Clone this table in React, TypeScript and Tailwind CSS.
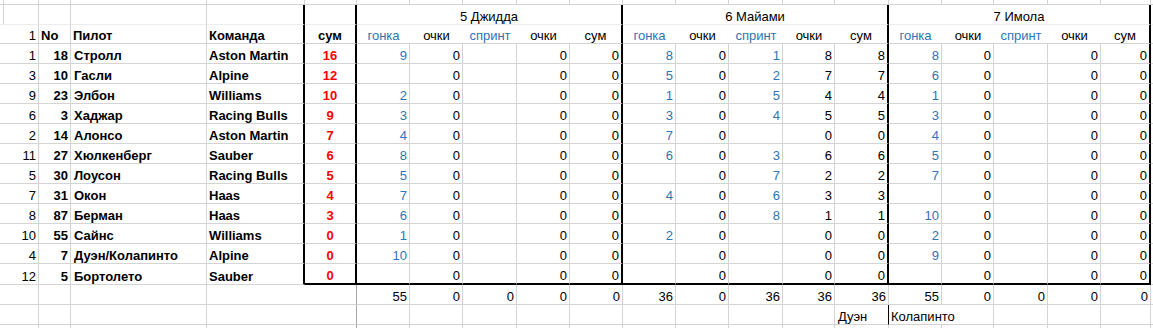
import React from "react";

const GRID =
  "grid grid-cols-[4px_35px_32px_136px_98px_52px_53px_53px_54px_53px_53px_53px_53px_54px_52px_54px_53px_52px_54px_53px_50px_2px]";

const R: Record<string, string> = {
  g: "border-r border-r-[#d4d4d4]",
  K: "border-r-2 border-r-black",
  k: "border-r border-r-black",
  d: "border-r border-r-[#a6a6a6]",
  n: "",
};
const B: Record<string, string> = {
  g: "border-b border-b-[#d4d4d4]",
  K: "border-b-2 border-b-black",
  f: "border-b border-b-[#ececec]",
  n: "",
};
const A: Record<string, string> = {
  r: "justify-end pr-[2px]",
  l: "justify-start pl-[2px]",
  c: "justify-center",
};

type CellProps = {
  r?: string;
  b?: string;
  a?: string;
  cls?: string;
  children?: React.ReactNode;
};

function Cell({ r = "g", b = "g", a = "r", cls = "", children }: CellProps) {
  return (
    <div
      className={`flex items-end whitespace-nowrap overflow-visible leading-[15px] ${R[r]} ${B[b]} ${A[a]} ${cls}`}
    >
      {children}
    </div>
  );
}

const BLUE = "text-[#2e75b6]";

const drivers: [string, string, string, string, string][] = [
  ["1", "18", "Стролл", "Aston Martin", "16"],
  ["3", "10", "Гасли", "Alpine", "12"],
  ["9", "23", "Элбон", "Williams", "10"],
  ["6", "3", "Хаджар", "Racing Bulls", "9"],
  ["2", "14", "Алонсо", "Aston Martin", "7"],
  ["11", "27", "Хюлкенберг", "Sauber", "6"],
  ["5", "30", "Лоусон", "Racing Bulls", "5"],
  ["7", "31", "Окон", "Haas", "4"],
  ["8", "87", "Берман", "Haas", "3"],
  ["10", "55", "Сайнс", "Williams", "0"],
  ["4", "7", "Дуэн/Колапинто", "Alpine", "0"],
  ["12", "5", "Бортолето", "Sauber", "0"],
];

const jed: string[][] = [
  ["9", "0", "", "0", "0"],
  ["", "0", "", "0", "0"],
  ["2", "0", "", "0", "0"],
  ["3", "0", "", "0", "0"],
  ["4", "0", "", "0", "0"],
  ["8", "0", "", "0", "0"],
  ["5", "0", "", "0", "0"],
  ["7", "0", "", "0", "0"],
  ["6", "0", "", "0", "0"],
  ["1", "0", "", "0", "0"],
  ["10", "0", "", "0", "0"],
  ["", "0", "", "0", "0"],
];

const mia: string[][] = [
  ["8", "0", "1", "8", "8"],
  ["5", "0", "2", "7", "7"],
  ["1", "0", "5", "4", "4"],
  ["3", "0", "4", "5", "5"],
  ["7", "0", "", "0", "0"],
  ["6", "0", "3", "6", "6"],
  ["", "0", "7", "2", "2"],
  ["4", "0", "6", "3", "3"],
  ["", "0", "8", "1", "1"],
  ["2", "0", "", "0", "0"],
  ["", "0", "", "0", "0"],
  ["", "0", "", "0", "0"],
];

const imo: string[][] = [
  ["8", "0", "", "0", "0"],
  ["6", "0", "", "0", "0"],
  ["1", "0", "", "0", "0"],
  ["3", "0", "", "0", "0"],
  ["4", "0", "", "0", "0"],
  ["5", "0", "", "0", "0"],
  ["7", "0", "", "0", "0"],
  ["", "0", "", "0", "0"],
  ["10", "0", "", "0", "0"],
  ["2", "0", "", "0", "0"],
  ["9", "0", "", "0", "0"],
  ["", "0", "", "0", "0"],
];

const sections = [
  { title: "5 Джидда", data: jed, tot: ["55", "0", "0", "0", "0"] },
  { title: "6 Майами", data: mia, tot: ["36", "0", "36", "36", "36"] },
  { title: "7 Имола", data: imo, tot: ["55", "0", "0", "0", "0"] },
];

const labels = ["гонка", "очки", "спринт", "очки", "сум"];
const labelBlue = [true, false, true, false, false];

export default function App() {
  const font = "font-['Liberation_Sans',Arial,sans-serif] text-[13px] text-black";
  return (
    <div className={`w-[1153px] h-[328px] overflow-hidden bg-white ${font}`}>
      {/* row 0 partial */}
      <div className={`${GRID} h-[5px]`}>
        {Array.from({ length: 22 }).map((_, i) => (
          <Cell key={i} r={i === 21 ? "n" : "g"} />
        ))}
      </div>

      {/* title row */}
      <div className={`${GRID} h-[20px]`}>
        <Cell b="f" />
        <Cell b="f" />
        <Cell b="f" />
        <Cell b="f" />
        <Cell b="f" r="K" />
        <Cell b="f" r="K" />
        {sections.map((s) => (
          <Cell key={s.title} b="f" r="K" a="c" cls="col-span-5">
            {s.title}
          </Cell>
        ))}
        <Cell b="f" r="n" />
      </div>

      {/* labels row */}
      <div className={`${GRID} h-[19px]`}>
        <Cell r="n" />
        <Cell a="r">1</Cell>
        <Cell a="l" cls="font-bold">
          No
        </Cell>
        <Cell a="l" cls="font-bold">
          Пилот
        </Cell>
        <Cell a="l" r="K" cls="font-bold">
          Команда
        </Cell>
        <Cell a="c" r="K" cls="font-bold">
          сум
        </Cell>
        {sections.map((s) =>
          labels.map((l, j) => (
            <Cell
              key={s.title + j}
              a="c"
              r={j === 4 ? "K" : "n"}
              cls={labelBlue[j] ? BLUE : ""}
            >
              {l}
            </Cell>
          ))
        )}
        <Cell r="n" />
      </div>

      {/* data rows */}
      {drivers.map((d, i) => {
        const last = i === drivers.length - 1;
        const sb = last ? "K" : "g";
        return (
          <div key={i} className={`${GRID} ${last ? "h-[21px]" : "h-[20px]"}`}>
            <Cell r="n" />
            <Cell a="r">{d[0]}</Cell>
            <Cell a="r" cls="font-bold">
              {d[1]}
            </Cell>
            <Cell a="l" cls="font-bold pl-[3px]">
              {d[2]}
            </Cell>
            <Cell a="l" r="K" cls="font-bold">
              {d[3]}
            </Cell>
            <Cell a="c" r="K" b={sb} cls="font-bold text-[#ff0000]">
              {d[4]}
            </Cell>
            {sections.map((s) =>
              s.data[i].map((v, j) => (
                <Cell
                  key={s.title + j}
                  a="r"
                  r={j === 4 ? "K" : "g"}
                  b={sb}
                  cls={labelBlue[j] ? BLUE : ""}
                >
                  {v}
                </Cell>
              ))
            )}
            <Cell r="n" />
          </div>
        );
      })}

      {/* totals row */}
      <div className={`${GRID} h-[20px]`}>
        <Cell r="n" />
        <Cell />
        <Cell />
        <Cell />
        <Cell r="n" />
        <Cell r="d" />
        {sections.map((s) =>
          s.tot.map((v, j) => (
            <Cell key={s.title + j} a="r">
              {v}
            </Cell>
          ))
        )}
        <Cell r="n" />
      </div>

      {/* extra row */}
      <div className={`${GRID} h-[20px]`}>
        <Cell r="n" />
        <Cell />
        <Cell />
        <Cell />
        <Cell r="n" />
        <Cell r="d" />
        <Cell />
        <Cell />
        <Cell />
        <Cell />
        <Cell />
        <Cell />
        <Cell />
        <Cell />
        <Cell />
        <Cell a="l" r="k" cls="pl-[3px]">
          Дуэн
        </Cell>
        <Cell a="l" r="n" cls="pl-[2px]">
          Колапинто
        </Cell>
        <Cell />
        <Cell />
        <Cell />
        <Cell />
        <Cell r="n" />
      </div>

      {/* tail */}
      <div className={`${GRID} h-[3px]`}>
        <Cell r="n" b="n" />
        <Cell b="n" />
        <Cell b="n" />
        <Cell b="n" />
        <Cell r="n" b="n" />
        <Cell r="d" b="n" />
        {Array.from({ length: 15 }).map((_, i) => (
          <Cell key={i} b="n" />
        ))}
        <Cell r="n" b="n" />
      </div>
    </div>
  );
}
